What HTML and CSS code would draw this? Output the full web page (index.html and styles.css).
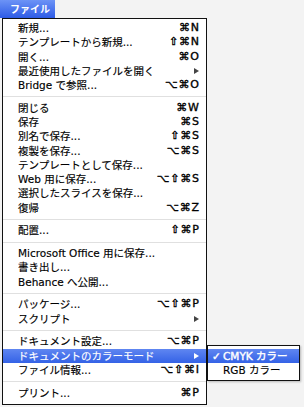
FILE: index.html
```html
<!DOCTYPE html>
<html lang="ja">
<head>
    <meta charset="UTF-8">
    <meta name="viewport" content="width=device-width, initial-scale=1.0">
    <title>ファイル メニュー</title>
    <link rel="stylesheet" href="styles.css">
</head>
<body>
    <div class="menubar">
        <span class="menu-title">ファイル</span>
    </div>
    <ul class="menu">
        <li class="item"><span>新規...</span><span class="key">⌘N</span></li>
        <li class="item"><span>テンプレートから新規...</span><span class="key">⇧⌘N</span></li>
        <li class="item"><span>開く...</span><span class="key">⌘O</span></li>
        <li class="item"><span>最近使用したファイルを開く</span><span class="arrow"></span></li>
        <li class="item"><span>Bridge で参照...</span><span class="key">⌥⌘O</span></li>
        <li class="sep"></li>
        <li class="item"><span>閉じる</span><span class="key">⌘W</span></li>
        <li class="item"><span>保存</span><span class="key">⌘S</span></li>
        <li class="item"><span>別名で保存...</span><span class="key">⇧⌘S</span></li>
        <li class="item"><span>複製を保存...</span><span class="key">⌥⌘S</span></li>
        <li class="item"><span>テンプレートとして保存...</span></li>
        <li class="item"><span>Web 用に保存...</span><span class="key">⌥⇧⌘S</span></li>
        <li class="item"><span>選択したスライスを保存...</span></li>
        <li class="item"><span>復帰</span><span class="key">⌥⌘Z</span></li>
        <li class="sep"></li>
        <li class="item"><span>配置...</span><span class="key">⇧⌘P</span></li>
        <li class="sep"></li>
        <li class="item"><span>Microsoft Office 用に保存...</span></li>
        <li class="item"><span>書き出し...</span></li>
        <li class="item"><span>Behance へ公開...</span></li>
        <li class="sep"></li>
        <li class="item"><span>パッケージ...</span><span class="key">⌥⇧⌘P</span></li>
        <li class="item"><span>スクリプト</span><span class="arrow"></span></li>
        <li class="sep"></li>
        <li class="item"><span>ドキュメント設定...</span><span class="key">⌥⌘P</span></li>
        <li class="item active">
            <span>ドキュメントのカラーモード</span><span class="arrow"></span>
            <ul class="submenu">
                <li class="item active"><span class="check">✓</span><span>CMYK カラー</span></li>
                <li class="item"><span>RGB カラー</span></li>
            </ul>
        </li>
        <li class="item"><span>ファイル情報...</span><span class="key">⌥⇧⌘I</span></li>
        <li class="sep"></li>
        <li class="item"><span>プリント...</span><span class="key">⌘P</span></li>
    </ul>
</body>
</html>
```

FILE: styles.css
```css
body {
    margin: 0;
    background-color: #f3f3f3;
    font-family: "DejaVu Sans", "Noto Sans CJK JP", sans-serif;
    font-size: 10.5px;
    color: #000;
}
.menubar {
    height: 18px;
}
.menu-title {
    display: inline-block;
    height: 18px;
    line-height: 18px;
    padding: 0 5px 0 10px;
    width: 40px;
    color: #fff;
    font-weight: bold;
    font-family: "Noto Sans CJK JP", sans-serif;
    font-size: 10px;
    background: linear-gradient(#6c93f6, #2d5be6);
}
.menu {
    list-style: none;
    margin: 0 0 0 2px;
    padding: 2px 0 4px;
    width: 205px;
    box-sizing: border-box;
    border: 1px solid #111;
    background-color: #fff;
}
.item {
    position: relative;
    display: flex;
    justify-content: space-between;
    align-items: center;
    height: 14.25px;
    line-height: 14.25px;
    padding: 0 7px 0 15px;
    white-space: nowrap;
    -webkit-text-stroke: 0.15px currentColor;
}
.sep {
    height: 8.5px;
    background: linear-gradient(transparent 4px, #e0e0e0 4px, #e0e0e0 5px, transparent 5px);
}
.key {
    font-size: 11px;
    letter-spacing: 0.8px;
    margin-right: -0.8px;
    -webkit-text-stroke: 0.35px currentColor;
}
.arrow {
    width: 0;
    height: 0;
    border-left: 5px solid #444;
    border-top: 3.5px solid transparent;
    border-bottom: 3.5px solid transparent;
}
.active {
    color: #fff;
    background: linear-gradient(#5f86f1, #3462e6);
}
.active .arrow {
    border-left-color: #fff;
}
.submenu {
    position: absolute;
    top: -4px;
    left: calc(100% + 1px);
    list-style: none;
    margin: 0;
    padding: 3px 0;
    width: 93px;
    box-sizing: border-box;
    border: 1px solid #111;
    background-color: #fff;
    color: #000;
    box-shadow: 1px 1px 2px rgba(0,0,0,0.25);
}
.submenu .item {
    justify-content: flex-start;
    padding: 0 0 0 15px;
}
.submenu .active {
    color: #fff;
    -webkit-text-stroke: 0.4px currentColor;
}
.check {
    position: absolute;
    left: 4px;
}
```
